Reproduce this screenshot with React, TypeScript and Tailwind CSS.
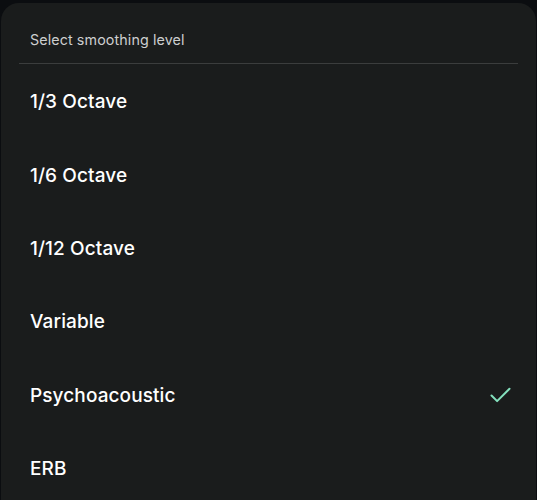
import { Check } from "lucide-react";

const options = ["1/3 Octave", "1/6 Octave", "1/12 Octave", "Variable", "Psychoacoustic", "ERB"];

export default function App() {
    const selected = "Psychoacoustic";

    return (
        <div className="w-[537px] h-[500px] bg-[#0b0d10] pt-[3px] overflow-hidden" style={{ fontFamily: "Inter, 'Noto Sans', sans-serif" }}>
            <div className="h-[520px] mx-px bg-[#1a1c1c] rounded-t-[18px]">
                <div className="h-[60px] px-[29px] pt-[26px] text-[14.3px] text-[#cdcecf] tracking-[0.1px]">
                    Select smoothing level
                </div>
                <div className="mx-[18px] h-px bg-[#3b3d3d]" />
                <ul>
                    {options.map((opt) => (
                        <li key={opt} className="h-[73.3px] flex items-center justify-between pl-[29px] pr-[22px] first:mt-[2px]">
                            <span className="text-[19px] font-medium text-white tracking-[0.1px]">{opt}</span>
                            {opt === selected && (
                                <Check className="w-[27px] h-[27px] text-[#84e0bd]" strokeWidth={1.8} />
                            )}
                        </li>
                    ))}
                </ul>
            </div>
        </div>
    );
}
